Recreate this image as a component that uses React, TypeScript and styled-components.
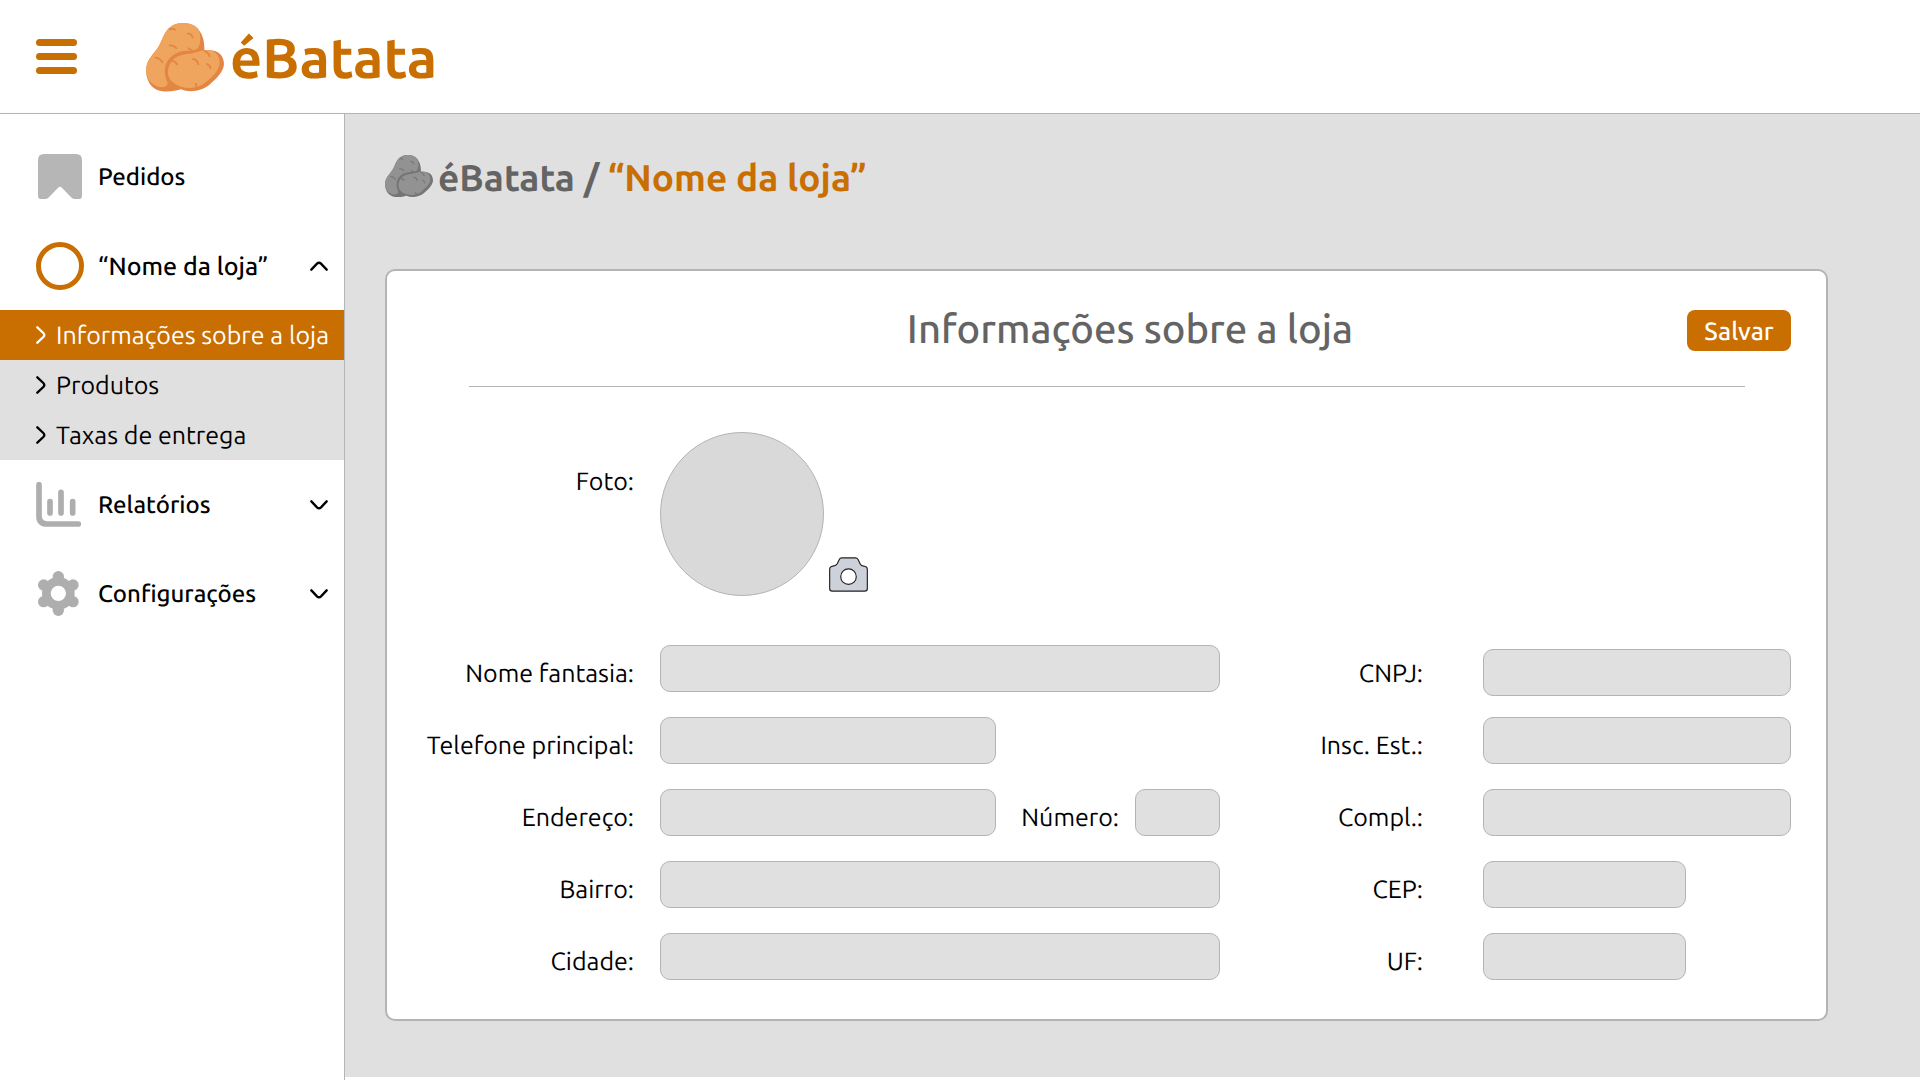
import React from "react";
import styled, { createGlobalStyle } from "styled-components";

const color = {
  brand: "#c96e00",
  line: "#b4b4b4",
  surface: "#e0e0e0",
  icon: "#aeaeae",
  muted: "#646464",
};

const GlobalStyle = createGlobalStyle`
  *, *::before, *::after { box-sizing: border-box; }
  body {
    margin: 0;
    background: #fff;
    color: #000;
    font-family: Ubuntu, "Noto Sans", "Open Sans", sans-serif;
    font-size: 25px;
    line-height: 32px;
    text-rendering: geometricPrecision;
  }
  button, input { font: inherit; color: inherit; text-rendering: inherit; }
  button { border: 0; padding: 0; background: none; cursor: pointer; }
  a { color: inherit; text-decoration: none; }
  svg { display: block; flex: none; }
`;

const Page = styled.div`
  display: flex;
  flex-direction: column;
  min-height: 100vh;
`;

const Header = styled.header`
  display: flex;
  align-items: center;
  gap: 69px;
  height: 114px;
  padding: 0 36px;
  border-bottom: 1px solid ${color.line};
`;

const MenuButton = styled.button`
  display: flex;
  flex-direction: column;
  gap: 7px;
  width: 41px;
`;

const MenuBar = styled.span`
  height: 7px;
  border-radius: 4px;
  background: ${color.brand};
`;

const Logo = styled.a`
  display: flex;
  align-items: center;
  gap: 6px;
  padding-top: 2px;
  color: ${color.brand};
  font-size: 56px;
  line-height: 68px;
  font-weight: 700;
`;

const Body = styled.div`
  display: flex;
  flex: 1;
`;

const Sidebar = styled.nav`
  flex: 0 0 345px;
  padding-top: 18px;
  border-right: 1px solid ${color.line};
`;

const NavItem = styled.button<{ $store?: boolean }>`
  display: flex;
  align-items: center;
  gap: 14px;
  width: 100%;
  height: 89px;
  padding: 0 16px 0 36px;
  font-size: ${(p) => (p.$store ? 25 : 24)}px;
  font-weight: 500;
  text-align: left;
`;

const NavText = styled.span`
  flex: 1;
  white-space: nowrap;
`;

const StoreRing = styled.span`
  width: 48px;
  height: 48px;
  border: 5px solid ${color.brand};
  border-radius: 50%;
`;

const SubLink = styled.a<{ $active?: boolean }>`
  display: flex;
  align-items: center;
  gap: 10px;
  height: 50px;
  padding-left: 36px;
  white-space: nowrap;
  background: ${(p) => (p.$active ? color.brand : color.surface)};
  color: ${(p) => (p.$active ? "#fff" : "#000")};
`;

const Main = styled.main`
  flex: 1;
  min-width: 0;
  margin-bottom: 3px;
  padding: 41px 92px 56px 40px;
  background: ${color.surface};
`;

const Breadcrumb = styled.h1`
  display: flex;
  align-items: center;
  gap: 5px;
  height: 42px;
  margin: 0 0 72px;
  color: ${color.muted};
  font-size: 37px;
  line-height: 42px;
  font-weight: 700;
`;

const Trail = styled.span`
  padding-top: 4px;
`;

const StoreName = styled.span`
  color: ${color.brand};
`;

const Card = styled.form`
  padding: 39px 35px 35px 36px;
  border: 2px solid ${color.line};
  border-radius: 10px;
  background: #fff;
`;

const CardHeader = styled.div`
  display: grid;
  grid-template-columns: 1fr auto 1fr;
  align-items: center;
  height: 41px;
  padding-left: 46px;
`;

const Title = styled.h2`
  grid-column: 2;
  margin: 0;
  padding-bottom: 4px;
  color: ${color.muted};
  font-size: 40px;
  line-height: 36px;
  font-weight: 500;
`;

const SaveButton = styled.button`
  justify-self: end;
  width: 104px;
  height: 41px;
  border-radius: 8px;
  background: ${color.brand};
  color: #fff;
  font-weight: 500;
`;

const Divider = styled.hr`
  height: 1px;
  margin: 35px 46px 45px;
  border: 0;
  background: ${color.line};
`;

const FormGrid = styled.div`
  display: grid;
  grid-template-columns: 237px minmax(0, 560fr) 263px minmax(0, 308fr);
  row-gap: 21px;
`;

const PhotoRow = styled(FormGrid)`
  margin-bottom: 49px;
`;

const Label = styled.label<{ $gap?: number }>`
  padding: 12px ${(p) => p.$gap ?? 26}px 0 0;
  text-align: right;
  white-space: nowrap;
`;

const PhotoLabel = styled(Label)`
  padding-top: 33px;
`;

const Photo = styled.div`
  display: flex;
  align-items: flex-end;
  gap: 5px;
`;

const Avatar = styled.div`
  width: 164px;
  height: 164px;
  border: 1px solid ${color.line};
  border-radius: 50%;
  background: #d9d9d9;
`;

const CameraButton = styled.button`
  padding-bottom: 4px;
`;

const Field = styled.div<{ $end?: boolean }>`
  display: flex;
  align-items: ${(p) => (p.$end ? "flex-end" : "flex-start")};
  height: 51px;
`;

const Input = styled.input<{ $width?: string }>`
  width: ${(p) => p.$width ?? "100%"};
  height: 47px;
  padding: 0 12px;
  border: 1px solid ${color.line};
  border-radius: 10px;
  background: ${color.surface};
`;

const InlineLabel = styled(Label)`
  flex: 1;
`;

function Potatoes({ width, light, dark }: { width: number; light: string; dark: string }) {
  return (
    <svg width={width} viewBox="48 38 234 206" aria-hidden="true">
      <path
        fill={dark}
        d="M160 38C198 38 226 68 223 121C262 114 282 134 282 162C280 187 256 207 240 222C221 239 184 250 152 237C128 245 97 247 76 236C52 222 44 189 51 161C59 138 78 125 90 101C102 76 111 38 160 38Z"
      />
      <path
        fill={light}
        d="M160 38C182 38 197 45 206 57C213 76 213 105 202 115C190 121 174 121 160 122C132 126 108 146 105 175C102 193 109 206 113 219C112 231 95 234 81 228C53 218 43 188 51 161C59 138 78 125 90 101C102 76 111 38 160 38Z"
      />
      <path
        fill={light}
        d="M115 174C121 146 146 133 172 131C196 130 208 119 233 119C255 120 269 135 269 158C267 180 251 195 235 209C211 233 181 237 153 229C124 219 109 201 115 174Z"
      />
      <g fill="none" stroke={dark} strokeWidth="5.500" strokeLinecap="round">
        <path d="M119 57Q126 52 135 58M173 69Q184 70 188 81M119 105Q134 104 139 114M77 142Q91 144 97 156M176 114L185 120M122 152Q135 150 141 162M189 146Q202 149 205 162M224 122Q236 127 239 138M231 161Q241 165 241 174M197 220Q201 224 199 233" />
      </g>
    </svg>
  );
}

const BookmarkIcon = () => (
  <svg width="48" height="45" viewBox="108 72 144 135" aria-hidden="true">
    <path
      fill="#b6b6b6"
      d="M132 72H228Q246 72 246 90V197Q246 207 236 207H225Q219 207 215 203L184 172Q180 168 176 172L145 203Q141 207 135 207H124Q114 207 114 197V90Q114 72 132 72Z"
    />
  </svg>
);

const ChartIcon = () => (
  <svg width="48" height="45" viewBox="108 426 144 135" aria-hidden="true">
    <path
      fill="none"
      stroke={color.icon}
      strokeWidth="17"
      strokeLinecap="round"
      d="M117 434V528Q117 552 141 552H235M150 485V519M183 457V519M218 485V519"
    />
  </svg>
);

const GearIcon = () => (
  <svg width="48" height="45" viewBox="108 693 144 135" fill={color.icon} aria-hidden="true">
    <circle cx="175" cy="760" r="36" fill="none" stroke={color.icon} strokeWidth="26" />
    <circle cx="175" cy="710" r="17" />
    <circle cx="219" cy="735" r="17" />
    <circle cx="219" cy="785" r="17" />
    <circle cx="175" cy="811" r="17" />
    <circle cx="131" cy="785" r="17" />
    <circle cx="131" cy="735" r="17" />
  </svg>
);

const Chevron = ({ up }: { up?: boolean }) => (
  <svg width="18" height="10" viewBox="0 0 54 30" aria-hidden="true">
    <path
      fill="none"
      stroke="currentColor"
      strokeWidth="7"
      strokeLinecap="round"
      d={up ? "M4 26L21 8Q27 2 33 8L50 26" : "M4 4L21 22Q27 28 33 22L50 4"}
    />
  </svg>
);

const Caret = () => (
  <svg width="10" height="18" viewBox="0 0 30 54" aria-hidden="true">
    <path
      fill="none"
      stroke="currentColor"
      strokeWidth="7"
      strokeLinecap="round"
      d="M4 4L22 21Q28 27 22 33L4 50"
    />
  </svg>
);

const CameraIcon = () => (
  <svg width="39" height="35" viewBox="867 441 118 105" stroke="#222" strokeWidth="3.500" aria-hidden="true">
    <path
      fill="#cdd1d9"
      d="M877 544Q869 544 869 536V478Q869 469 879 468Q889 467 892 461L898 448Q900 443 906 443H947Q952 443 955 448L961 461Q964 468 972 468Q983 469 983 478V536Q983 544 975 544Z"
    />
    <circle cx="926" cy="500" r="23.500" fill="#fff" />
  </svg>
);

export default function App() {
  return (
    <Page>
      <GlobalStyle />
      <Header>
        <MenuButton type="button" aria-label="Menu">
          <MenuBar />
          <MenuBar />
          <MenuBar />
        </MenuButton>
        <Logo href="#">
          <Potatoes width={78} light="#f0a55e" dark="#e28642" />
          éBatata
        </Logo>
      </Header>
      <Body>
        <Sidebar>
          <NavItem type="button">
            <BookmarkIcon />
            <NavText>Pedidos</NavText>
          </NavItem>
          <NavItem type="button" $store aria-expanded="true">
            <StoreRing />
            <NavText>“Nome da loja”</NavText>
            <Chevron up />
          </NavItem>
          <SubLink href="#informacoes" $active aria-current="page"><Caret />Informações sobre a loja</SubLink>
          <SubLink href="#produtos"><Caret />Produtos</SubLink>
          <SubLink href="#taxas"><Caret />Taxas de entrega</SubLink>
          <NavItem type="button" aria-expanded="false">
            <ChartIcon />
            <NavText>Relatórios</NavText>
            <Chevron />
          </NavItem>
          <NavItem type="button" aria-expanded="false">
            <GearIcon />
            <NavText>Configurações</NavText>
            <Chevron />
          </NavItem>
        </Sidebar>
        <Main>
          <Breadcrumb>
            <Potatoes width={48} light="#929292" dark="#757575" />
            <Trail>
              éBatata / <StoreName>“Nome da loja”</StoreName>
            </Trail>
          </Breadcrumb>
          <Card onSubmit={(e) => e.preventDefault()}>
            <CardHeader>
              <Title>Informações sobre a loja</Title>
              <SaveButton type="submit">Salvar</SaveButton>
            </CardHeader>
            <Divider />
            <PhotoRow>
              <PhotoLabel htmlFor="foto">Foto:</PhotoLabel>
              <Photo>
                <Avatar />
                <CameraButton type="button" id="foto"><CameraIcon /></CameraButton>
              </Photo>
            </PhotoRow>
            <FormGrid>
              <Label htmlFor="nome">Nome fantasia:</Label>
              <Field><Input id="nome" /></Field>
              <Label htmlFor="cnpj" $gap={60}>CNPJ:</Label>
              <Field $end><Input id="cnpj" /></Field>

              <Label htmlFor="telefone">Telefone principal:</Label>
              <Field><Input id="telefone" type="tel" $width="60%" /></Field>
              <Label htmlFor="inscricao" $gap={60}>Insc. Est.:</Label>
              <Field><Input id="inscricao" /></Field>

              <Label htmlFor="endereco">Endereço:</Label>
              <Field>
                <Input id="endereco" $width="60%" />
                <InlineLabel htmlFor="numero" $gap={16}>Número:</InlineLabel>
                <Input id="numero" $width="85px" />
              </Field>
              <Label htmlFor="complemento" $gap={60}>Compl.:</Label>
              <Field><Input id="complemento" /></Field>

              <Label htmlFor="bairro">Bairro:</Label>
              <Field><Input id="bairro" /></Field>
              <Label htmlFor="cep" $gap={60}>CEP:</Label>
              <Field><Input id="cep" $width="66%" /></Field>

              <Label htmlFor="cidade">Cidade:</Label>
              <Field><Input id="cidade" /></Field>
              <Label htmlFor="uf" $gap={60}>UF:</Label>
              <Field><Input id="uf" $width="66%" /></Field>
            </FormGrid>
          </Card>
        </Main>
      </Body>
    </Page>
  );
}
